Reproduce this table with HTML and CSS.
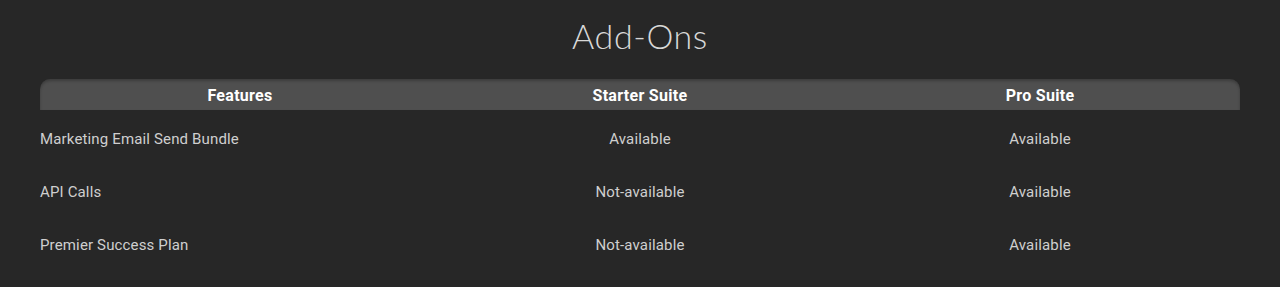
FILE: index.html
```html
<!DOCTYPE html>
<html>
<head>
<meta charset="utf-8">
<link rel="stylesheet" href="styles.css">
</head>
<body>
<div class="page">
  <h1 class="title">Add-Ons</h1>
  <div class="table">
    <div class="row head">
      <div class="cell">Features</div>
      <div class="cell">Starter Suite</div>
      <div class="cell">Pro Suite</div>
    </div>
    <div class="row">
      <div class="cell feat">Marketing Email Send Bundle</div>
      <div class="cell">Available</div>
      <div class="cell">Available</div>
    </div>
    <div class="row">
      <div class="cell feat">API Calls</div>
      <div class="cell">Not-available</div>
      <div class="cell">Available</div>
    </div>
    <div class="row">
      <div class="cell feat">Premier Success Plan</div>
      <div class="cell">Not-available</div>
      <div class="cell">Available</div>
    </div>
  </div>
</div>
</body>
</html>
```
FILE: styles.css
```css
html, body {
  margin: 0;
  padding: 0;
  background: #272727;
}
.page {
  padding: 0 40px;
  font-family: Roboto, "Liberation Sans", sans-serif;
}
.title {
  margin: 0;
  height: 79px;
  line-height: 72px;
  text-align: center;
  font-family: Lato, "Open Sans", sans-serif;
  font-weight: 300;
  font-size: 34px;
  color: #d8d8d8;
  letter-spacing: 0.6px;
}
.table {
  display: flex;
  flex-direction: column;
}
.row {
  display: grid;
  grid-template-columns: 1fr 1fr 1fr;
  height: 53px;
  align-items: center;
  font-size: 15px;
  letter-spacing: 0.15px;
  color: #cfcfcf;
}
.row .cell {
  text-align: center;
}
.row .cell.feat {
  text-align: left;
}
.row.head {
  height: 31px;
  background: #4f4f4f;
  border-radius: 10px 10px 0 0;
  box-shadow: inset 0 2px 3px rgba(0,0,0,0.25);
  font-size: 16px;
  letter-spacing: 0.3px;
  font-weight: 700;
  color: #ffffff;
  padding-top: 1px;
  box-sizing: border-box;
}
.row:not(.head) {
  padding-top: 4px;
  box-sizing: border-box;
}
```
